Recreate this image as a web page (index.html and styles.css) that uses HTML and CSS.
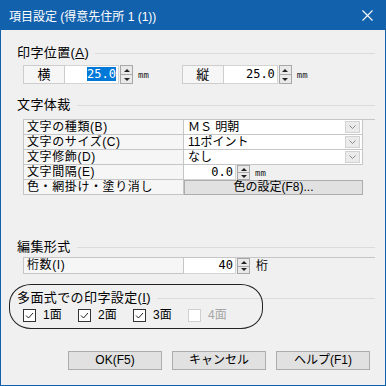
FILE: index.html
```html
<!DOCTYPE html>
<html lang="ja">
<head>
    <meta charset="UTF-8">
    <link rel="stylesheet" href="styles.css">
    <title>項目設定</title>
</head>
<body>
<div class="window">
    <div class="titlebar">
        <span class="title">項目設定 (得意先住所 1 (1))</span>
        <svg class="close" width="11" height="11" viewBox="0 0 11 11">
            <path d="M0.5 0.5 L10.5 10.5 M10.5 0.5 L0.5 10.5" stroke="#fff" stroke-width="1.1" fill="none"/>
        </svg>
    </div>
    <div class="content">
        <div class="group-title"><span>印字位置(<u>A</u>)</span></div>
        <div class="pos-row">
            <div class="pos-group">
                <span class="cap">横</span>
                <span class="num"><span class="sel">25.0</span></span>
                <span class="spin"><i class="up"></i><i class="down"></i></span>
                <span class="unit">mm</span>
            </div>
            <div class="pos-group second">
                <span class="cap">縦</span>
                <span class="num">25.0</span>
                <span class="spin"><i class="up"></i><i class="down"></i></span>
                <span class="unit">mm</span>
            </div>
        </div>

        <div class="group-title gap-style"><span>文字体裁</span></div>
        <div class="props">
            <div class="lbl">文字の種類(B)</div>
            <div class="val select">ＭＳ 明朝<span class="drop"><svg width="7" height="4" viewBox="0 0 7 4"><path d="M0.5 0.5 L3.5 3.5 L6.5 0.5" stroke="#888" fill="none"/></svg></span></div>
            <div class="lbl">文字のサイズ(C)</div>
            <div class="val select">11ポイント<span class="drop"><svg width="7" height="4" viewBox="0 0 7 4"><path d="M0.5 0.5 L3.5 3.5 L6.5 0.5" stroke="#888" fill="none"/></svg></span></div>
            <div class="lbl">文字修飾(D)</div>
            <div class="val select">なし<span class="drop"><svg width="7" height="4" viewBox="0 0 7 4"><path d="M0.5 0.5 L3.5 3.5 L6.5 0.5" stroke="#888" fill="none"/></svg></span></div>
            <div class="lbl">文字間隔(E)</div>
            <div class="val plain">
                <span class="num small">0.0</span>
                <span class="spin small"><i class="up"></i><i class="down"></i></span>
                <span class="unit">mm</span>
            </div>
            <div class="lbl">色・網掛け・塗り消し</div>
            <div class="val plain"><span class="color-btn">色の設定(F8)...</span></div>
        </div>

        <div class="group-title edit-title"><span>編集形式</span></div>
        <div class="props single">
            <div class="lbl">桁数(I)</div>
            <div class="val plain">
                <span class="num small">40</span>
                <span class="spin small"><i class="up"></i><i class="down"></i></span>
                <span class="unit-kanji">桁</span>
            </div>
        </div>

        <div class="multi">
            <div class="group-title"><span>多面式での印字設定(<u>I</u>)</span></div>
            <div class="checks">
                <label class="check"><span class="box"><svg width="11" height="11" viewBox="0 0 11 11"><path d="M2 5.5 L4.5 8 L9 3" stroke="#222" stroke-width="1" fill="none"/></svg></span>1面</label>
                <label class="check"><span class="box"><svg width="11" height="11" viewBox="0 0 11 11"><path d="M2 5.5 L4.5 8 L9 3" stroke="#222" stroke-width="1" fill="none"/></svg></span>2面</label>
                <label class="check"><span class="box"><svg width="11" height="11" viewBox="0 0 11 11"><path d="M2 5.5 L4.5 8 L9 3" stroke="#222" stroke-width="1" fill="none"/></svg></span>3面</label>
                <label class="check disabled"><span class="box"></span>4面</label>
            </div>
            <div class="mark"></div>
        </div>

        <div class="buttons">
            <span class="btn">OK(F5)</span>
            <span class="btn">キャンセル</span>
            <span class="btn">ヘルプ(F1)</span>
        </div>
    </div>
</div>
</body>
</html>
```

FILE: styles.css
```css
* {
    box-sizing: border-box;
}

body {
    margin: 0;
    background: #f0f0f0;
    font-family: "Liberation Sans", "Noto Sans CJK JP", sans-serif;
    font-size: 13px;
    color: #000;
}

.window {
    width: 386px;
    height: 386px;
    border: 1px solid #1261ad;
    border-top: 0;
    background: #f0f0f0;
}

.titlebar {
    height: 30px;
    background: #1261ad;
    color: #fff;
    display: flex;
    align-items: center;
    padding: 0 12px 0 8px;
    font-size: 12px;
}

.title {
    flex: 1;
}

.content {
    padding: 16px 10px 0 16px;
}

/* section headings with the etched line */
.group-title {
    display: flex;
    align-items: center;
    height: 14px;
    line-height: 14px;
    gap: 6px;
    letter-spacing: 0.4px;
}

.group-title::after {
    content: "";
    flex: 1;
    height: 1px;
    background: #dcdcdc;
}

.gap-style {
    margin-top: 14px;
}

.edit-title {
    margin-top: 45px;
}

/* position row */
.pos-row {
    display: flex;
    margin-top: 5px;
    padding-left: 6px;
    height: 19px;
}

.pos-group {
    display: flex;
    align-items: stretch;
}

.pos-group.second {
    margin-left: 33px;
}

.cap {
    width: 42px;
    border: 1px solid #cdcdcd;
    background: #f6f6f6;
    text-align: center;
    line-height: 17px;
}

.num {
    width: 54px;
    background: #fff;
    border: 1px solid #d4d4d4;
    border-left: 0;
    text-align: right;
    padding-right: 2px;
    line-height: 17px;
    font-family: "DejaVu Sans Mono", monospace;
    font-size: 12px;
}

.sel {
    background: #0078d7;
    color: #fff;
}

.spin {
    width: 13px;
    margin-left: 1px;
    display: flex;
    flex-direction: column;
    border: 1px solid #a8a8a8;
    background: #e9e9e9;
}

.spin i {
    flex: 1;
    display: flex;
    align-items: center;
    justify-content: center;
}

.spin i::before {
    content: "";
    border-left: 3px solid transparent;
    border-right: 3px solid transparent;
}

.spin .up::before {
    border-bottom: 3px solid #222;
}

.spin .down {
    border-top: 1px solid #a8a8a8;
}

.spin .down::before {
    border-top: 3px solid #222;
}

.unit {
    margin-left: 5px;
    font-family: "DejaVu Sans Mono", monospace;
    font-size: 9px;
    align-self: center;
    color: #222;
}

.unit-kanji {
    margin-left: 6px;
    align-self: center;
    line-height: 14px;
}

/* property grid */
.props {
    display: grid;
    grid-template-columns: 160px 179px;
    grid-auto-rows: 15px;
    margin-top: 7px;
    margin-left: 6px;
    border-top: 1px solid #c6c6c6;
    border-left: 1px solid #c6c6c6;
    font-size: 12px;
}

.props.single {
    margin-top: 3px;
    grid-auto-rows: 16px;
}

.lbl {
    background: #f6f6f6;
    border-right: 1px solid #c6c6c6;
    border-bottom: 1px solid #c6c6c6;
    padding-left: 3px;
    line-height: 14px;
    letter-spacing: 0.6px;
    white-space: nowrap;
}

.val {
    display: flex;
    align-items: stretch;
    line-height: 14px;
}

.val.select {
    background: #fff;
    border-right: 1px solid #c6c6c6;
    border-bottom: 1px solid #c6c6c6;
    padding-left: 4px;
    justify-content: space-between;
}

.drop {
    width: 15px;
    margin: 1px 2px 1px 0;
    background: #ebebeb;
    border: 1px solid #d2d2d2;
    display: flex;
    align-items: center;
    justify-content: center;
}

.val.plain {
    background: transparent;
}

.num.small {
    width: 52px;
    border-left: 0;
    border-top: 0;
    line-height: 14px;
}

.spin.small {
    margin-left: 1px;
}

.color-btn {
    flex: 1;
    background: #e1e1e1;
    border: 1px solid #adadad;
    text-align: center;
    font-size: 12px;
    line-height: 13px;
}

/* multi-face settings */
.multi {
    position: relative;
    margin-top: 17px;
}

.checks {
    display: flex;
    margin-top: 4px;
    padding-left: 6px;
    height: 13px;
}

.check {
    display: flex;
    align-items: center;
    width: 55px;
    line-height: 13px;
    font-size: 12px;
}

.box {
    width: 13px;
    height: 13px;
    border: 1px solid #333;
    background: #fff;
    margin-right: 7px;
    display: flex;
    align-items: center;
    justify-content: center;
}

.check.disabled {
    color: #a6a6a6;
}

.check.disabled .box {
    border-color: #d0d0d0;
}

/* hand drawn annotation around the section */
.mark {
    position: absolute;
    left: -8px;
    top: -7px;
    width: 254px;
    height: 45px;
    border: 1.5px solid #222;
    border-radius: 22px / 20px;
}

.buttons {
    display: flex;
    justify-content: flex-end;
    gap: 10px;
    margin-top: 29px;
    padding-right: 5px;
}

.btn {
    width: 94px;
    height: 19px;
    background: #e1e1e1;
    border: 1px solid #adadad;
    text-align: center;
    font-size: 12px;
    line-height: 17px;
}
```
